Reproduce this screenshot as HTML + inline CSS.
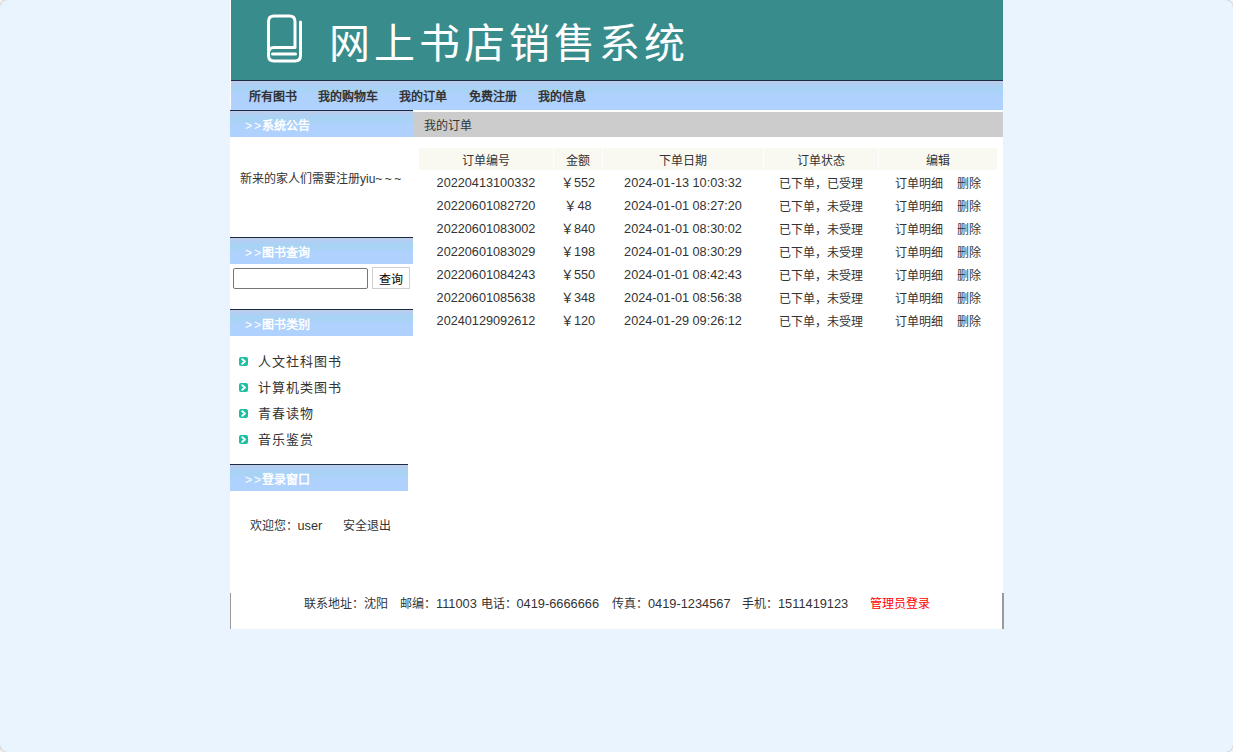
<!DOCTYPE html>
<html lang="zh-CN">
<head>
<meta charset="utf-8">
<style>
*{margin:0;padding:0;box-sizing:border-box}
html,body{width:1233px;height:752px;overflow:hidden;background:#E9F4FE;font-family:"Liberation Sans",sans-serif;color:#333;font-size:12px}
.abs{position:absolute}
#wrap{position:absolute;left:230px;top:0;width:773px;height:629px;background:#fff}
#hdr{position:absolute;left:231px;top:0;width:772px;height:80px;background:#388D8C}
#title{position:absolute;left:329px;top:19.5px;font-size:41px;line-height:48px;color:#fff;letter-spacing:4px;white-space:nowrap;font-weight:400}
#nav{position:absolute;left:231px;top:80px;width:772px;height:30px;
 background:linear-gradient(to bottom,#1C2B45 0,#1C2B45 1px,#BCCDE9 1px,#BCCDE9 3px,#B2CEF2 3px,#B2CEF2 6px,#A9D3F4 6px,#A9D3F4 12px,#AED1FD 14px,#AED1FD 30px)}
.nv{position:absolute;top:2px;line-height:30px;font-weight:bold;font-size:12px;color:#333;white-space:nowrap}
.sh{position:absolute;left:230px;width:183px;height:27px;
 background:linear-gradient(to bottom,#1C2B45 0,#1C2B45 1px,#BCCDE9 1px,#BCCDE9 3px,#B2CEF2 3px,#B2CEF2 6px,#A9D3F4 6px,#A9D3F4 12px,#AED1FD 14px,#AED1FD 27px)}
.sh span{position:absolute;left:31.5px;top:3px;line-height:26px;color:#fff;font-weight:bold;font-size:12px;white-space:nowrap}
.sh b{position:absolute;left:15px;top:2.5px;line-height:26px;color:#fff;font-weight:normal;font-size:12px;letter-spacing:2px;white-space:nowrap}
#gbar{position:absolute;left:413px;top:112px;width:590px;height:25px;background:#CCCCCC}
#gbar span{position:absolute;left:11px;top:2px;line-height:25px;font-size:12px;color:#333}
table{position:absolute;left:418px;top:147px;border-collapse:separate;border-spacing:1px;table-layout:fixed;width:580px}
td,th{height:22px;padding:0;text-align:center;font-size:12px;font-weight:normal;line-height:22px;color:#333;white-space:nowrap}
th{background:#F9F9F2}
td span,th span{position:relative;top:1.5px}
.n{font-size:12.7px;top:1px}
#notice{position:absolute;left:240px;top:170.5px;line-height:16px;font-size:12px}
#inp{position:absolute;left:233px;top:268px;width:135px;height:21px;border:1px solid #767676;border-radius:2px;background:#fff}
#btn{position:absolute;left:372px;top:267px;width:38px;height:22px;border:1px solid #CFCFCF;background:#fff;font-size:12px;line-height:25px;text-align:center;color:#000}
.cat{position:absolute;left:239px;height:20px;white-space:nowrap}
.cat i{position:absolute;left:0;top:6px;width:9px;height:9px;border-radius:2px;background:#1DBFA3}

.cat span{position:absolute;left:19px;top:0px;line-height:22px;font-size:13px;letter-spacing:1px;color:#333}
#login{position:absolute;left:249.5px;top:517px;line-height:18px;font-size:12px;white-space:nowrap}
#login2{position:absolute;left:342.5px;top:517px;line-height:18px;font-size:12px;white-space:nowrap}
#foot{position:absolute;left:230px;top:593px;width:774px;height:36px;border-left:1px solid #9A9A9A;border-right:2px solid #9A9A9A;background:#fff}
#foot em{font-style:normal;font-size:12.8px}
#foot span{position:absolute;top:1.5px;line-height:18px;font-size:12px;white-space:nowrap}
</style>
</head>
<body>
<div id="wrap"></div>
<div id="hdr">
</div>
<svg class="abs" style="left:0;top:0" width="1233" height="80">
 <g fill="none" stroke="#fff" stroke-width="3" stroke-linecap="round" stroke-linejoin="round">
  <path d="M268.5 50 V21.5 Q268.5 16 274 16 H289.5 Q295 16 295 21.5 V47.5 H274 Q268.5 47.5 268.5 53 V55.5 Q268.5 61 274 61 H295 Q300.5 61 300.5 55.5 V22"/>
  <path d="M272.5 54 H295.5"/>
 </g>
</svg>
<div id="title">网上书店销售系统</div>
<div id="nav">
 <span class="nv" style="left:18px">所有图书</span>
 <span class="nv" style="left:87px">我的购物车</span>
 <span class="nv" style="left:168px">我的订单</span>
 <span class="nv" style="left:238px">免费注册</span>
 <span class="nv" style="left:307px">我的信息</span>
</div>

<div class="sh" style="top:110px"><b>&gt;&gt;</b><span>系统公告</span></div>
<div id="notice">新来的家人们需要注册yiu<i style="font-style:normal;letter-spacing:2.4px">~~~</i></div>
<div class="sh" style="top:237px"><b>&gt;&gt;</b><span>图书查询</span></div>
<div id="inp"></div>
<div id="btn">查询</div>
<div class="sh" style="top:309px"><b>&gt;&gt;</b><span>图书类别</span></div>
<div class="cat" style="top:351px"><i><svg width="9" height="9" style="position:absolute;left:0;top:0"><path d="M3.3 2.2 L5.9 4.5 L3.3 6.8" fill="none" stroke="#fff" stroke-width="1.9" stroke-linecap="round" stroke-linejoin="round"/></svg></i><span>人文社科图书</span></div>
<div class="cat" style="top:377px"><i><svg width="9" height="9" style="position:absolute;left:0;top:0"><path d="M3.3 2.2 L5.9 4.5 L3.3 6.8" fill="none" stroke="#fff" stroke-width="1.9" stroke-linecap="round" stroke-linejoin="round"/></svg></i><span>计算机类图书</span></div>
<div class="cat" style="top:403px"><i><svg width="9" height="9" style="position:absolute;left:0;top:0"><path d="M3.3 2.2 L5.9 4.5 L3.3 6.8" fill="none" stroke="#fff" stroke-width="1.9" stroke-linecap="round" stroke-linejoin="round"/></svg></i><span>青春读物</span></div>
<div class="cat" style="top:429px"><i><svg width="9" height="9" style="position:absolute;left:0;top:0"><path d="M3.3 2.2 L5.9 4.5 L3.3 6.8" fill="none" stroke="#fff" stroke-width="1.9" stroke-linecap="round" stroke-linejoin="round"/></svg></i><span>音乐鉴赏</span></div>
<div class="sh" style="top:464px;width:178px"><b>&gt;&gt;</b><span>登录窗口</span></div>
<div id="login">欢迎您：<em style="font-style:normal;font-size:12.7px">user</em></div><div id="login2">安全退出</div>

<div id="gbar"><span>我的订单</span></div>
<table>
 <colgroup><col style="width:134px"><col style="width:48px"><col style="width:160px"><col style="width:114px"><col style="width:118px"></colgroup>
 <tr><th><span>订单编号</span></th><th><span>金额</span></th><th><span>下单日期</span></th><th><span>订单状态</span></th><th><span>编辑</span></th></tr>
 <tr><td><span class="n">20220413100332</span></td><td><span class="n">￥552</span></td><td><span class="n">2024-01-13 10:03:32</span></td><td><span>已下单，已受理</span></td><td><span>订单明细&nbsp;&nbsp;&nbsp;&nbsp;删除</span></td></tr>
 <tr><td><span class="n">20220601082720</span></td><td><span class="n">￥48</span></td><td><span class="n">2024-01-01 08:27:20</span></td><td><span>已下单，未受理</span></td><td><span>订单明细&nbsp;&nbsp;&nbsp;&nbsp;删除</span></td></tr>
 <tr><td><span class="n">20220601083002</span></td><td><span class="n">￥840</span></td><td><span class="n">2024-01-01 08:30:02</span></td><td><span>已下单，未受理</span></td><td><span>订单明细&nbsp;&nbsp;&nbsp;&nbsp;删除</span></td></tr>
 <tr><td><span class="n">20220601083029</span></td><td><span class="n">￥198</span></td><td><span class="n">2024-01-01 08:30:29</span></td><td><span>已下单，未受理</span></td><td><span>订单明细&nbsp;&nbsp;&nbsp;&nbsp;删除</span></td></tr>
 <tr><td><span class="n">20220601084243</span></td><td><span class="n">￥550</span></td><td><span class="n">2024-01-01 08:42:43</span></td><td><span>已下单，未受理</span></td><td><span>订单明细&nbsp;&nbsp;&nbsp;&nbsp;删除</span></td></tr>
 <tr><td><span class="n">20220601085638</span></td><td><span class="n">￥348</span></td><td><span class="n">2024-01-01 08:56:38</span></td><td><span>已下单，未受理</span></td><td><span>订单明细&nbsp;&nbsp;&nbsp;&nbsp;删除</span></td></tr>
 <tr><td><span class="n">20240129092612</span></td><td><span class="n">￥120</span></td><td><span class="n">2024-01-29 09:26:12</span></td><td><span>已下单，未受理</span></td><td><span>订单明细&nbsp;&nbsp;&nbsp;&nbsp;删除</span></td></tr>
</table>

<div id="foot">
 <span style="left:73px">联系地址：沈阳</span>
 <span style="left:169px">邮编：<em>111003</em></span>
 <span style="left:249.5px">电话：<em>0419-6666666</em></span>
 <span style="left:381px">传真：<em>0419-1234567</em></span>
 <span style="left:511px">手机：<em>1511419123</em></span>
 <span style="left:638.5px;color:#f00">管理员登录</span>
</div>
<div style="position:absolute;left:0;top:0;width:1233px;height:752px;border-radius:8px;box-shadow:0 0 0 1px #d4d4d4,0 0 0 40px #f3f3f3;pointer-events:none"></div>
</body>
</html>
